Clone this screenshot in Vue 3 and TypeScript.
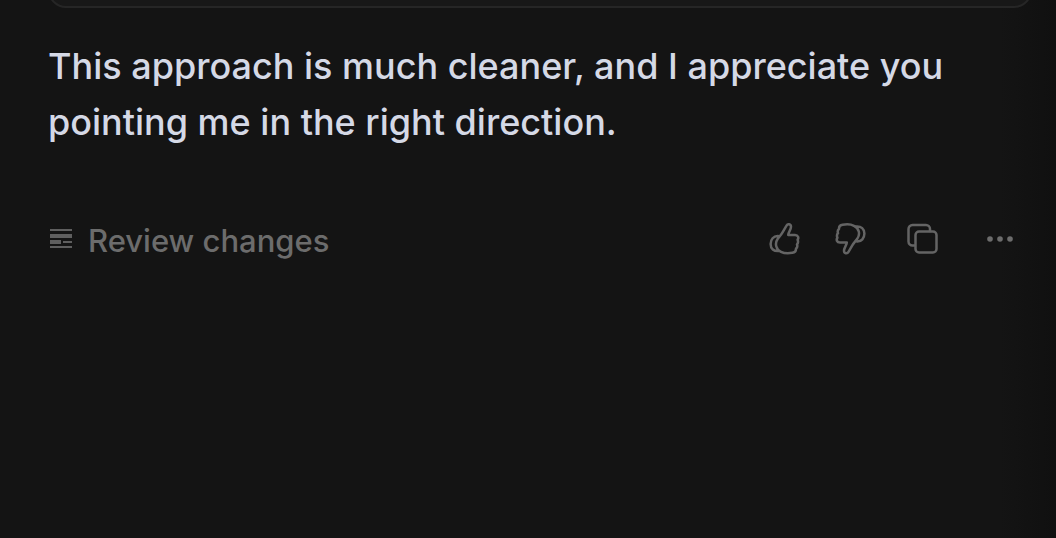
<script setup lang="ts">
const message: string =
  'This approach is much cleaner, and I appreciate you pointing me in the right direction.'
const thumb: string =
  'M9.6 16C11.5 13.5 13.2 11.8 14.7 9.200L18.500 2.700C19.700 .5 23 .8 23 3.800C23 6.800 20.400 9.200 20.200 12H27C30.2 12.2 31 14.8 29.600 16.800C30.3 18.600 30 20.400 29 21.400C29.600 23.2 29.1 24.800 28 25.600C28.2 28 26.800 29.400 24.400 29.800C20.500 30.500 16 30.300 13 28.800C8 26.4 6.500 20.600 9.600 16ZM10 13C5.500 12.800 2.600 16.500 2.600 21C2.600 25.500 5.500 28.700 11.500 28'
</script>

<template>
  <main class="panel">
    <div class="previous"></div>
    <p class="message">{{ message }}</p>
    <footer class="toolbar">
      <button class="review" type="button">
        <svg width="22" height="20" viewBox="0 0 22 20" aria-hidden="true">
          <path d="M0 0h22v2H0zM0 5h22v4H0zM0 11h11v4H0zM13 12h9v2h-9zM0 17h22v2H0z" />
        </svg>
        <span>Review changes</span>
      </button>
      <div class="actions">
        <button class="icon" type="button" aria-label="Good response">
          <svg width="32" height="32" viewBox="0 0 32 32"><path :d="thumb" /></svg>
        </button>
        <button class="icon" type="button" aria-label="Bad response">
          <svg width="32" height="32" viewBox="0 0 32 32">
            <path :d="thumb" transform="rotate(180 16.5 15.8)" />
          </svg>
        </button>
        <button class="icon copy" type="button" aria-label="Copy">
          <svg width="32" height="32" viewBox="0 0 32 32">
            <path d="M8.5 22.5H6.500a4 4 0 0 1-4-4V6a4 4 0 0 1 4-4h13.500a4 4 0 0 1 4 4v2" />
            <rect x="9.5" y="8.5" width="21" height="21" rx="3.5" />
          </svg>
        </button>
        <button class="icon more" type="button" aria-label="More actions">
          <svg width="32" height="32" viewBox="0 0 32 32">
            <circle cx="6" cy="16" r="2.8" />
            <circle cx="16" cy="16" r="2.8" />
            <circle cx="26" cy="16" r="2.8" />
          </svg>
        </button>
      </div>
    </footer>
  </main>
</template>

<style>
body {
  margin: 0;
  background: #141414;
}
</style>

<style scoped>
.panel {
  box-sizing: border-box;
  min-height: 100vh;
  padding: 0 24px 0 48px;
  background: linear-gradient(to left, #101010, #141414 56px);
  font-family: Inter, "Liberation Sans", sans-serif;
  font-optical-sizing: none;
  overflow: hidden;
}
.previous {
  box-sizing: border-box;
  height: 40px;
  margin-top: -32px;
  border: 2px solid #262626;
  border-radius: 18px;
  background: #181818;
}
.message {
  margin: 0;
  padding: 30px 24px 0 0;
  color: #d5d9e6;
  font-size: 36px;
  font-weight: 500;
  line-height: 56px;
}
.toolbar {
  display: flex;
  align-items: center;
  justify-content: space-between;
  margin-top: 65px;
}
button {
  display: flex;
  align-items: center;
  padding: 0;
  border: 0;
  background: none;
  color: #6c6c6c;
  font: inherit;
  cursor: pointer;
}
.review {
  gap: 16px;
  margin-left: 2px;
  font-size: 31px;
  font-weight: 500;
  line-height: 44px;
}
.review span {
  padding-top: 4px;
}
.review svg {
  fill: #5f5f5f;
}
.actions {
  display: flex;
  padding-right: 16px;
}
.icon {
  margin-left: 34px;
}
.icon svg {
  fill: none;
  stroke: #646464;
  stroke-width: 2.5;
  stroke-linejoin: round;
  stroke-linecap: round;
}
.icon.copy {
  margin-left: 40px;
}
.icon.more {
  margin-left: 46px;
}
.icon.more svg {
  fill: #6c6c6c;
  stroke: none;
}
</style>
